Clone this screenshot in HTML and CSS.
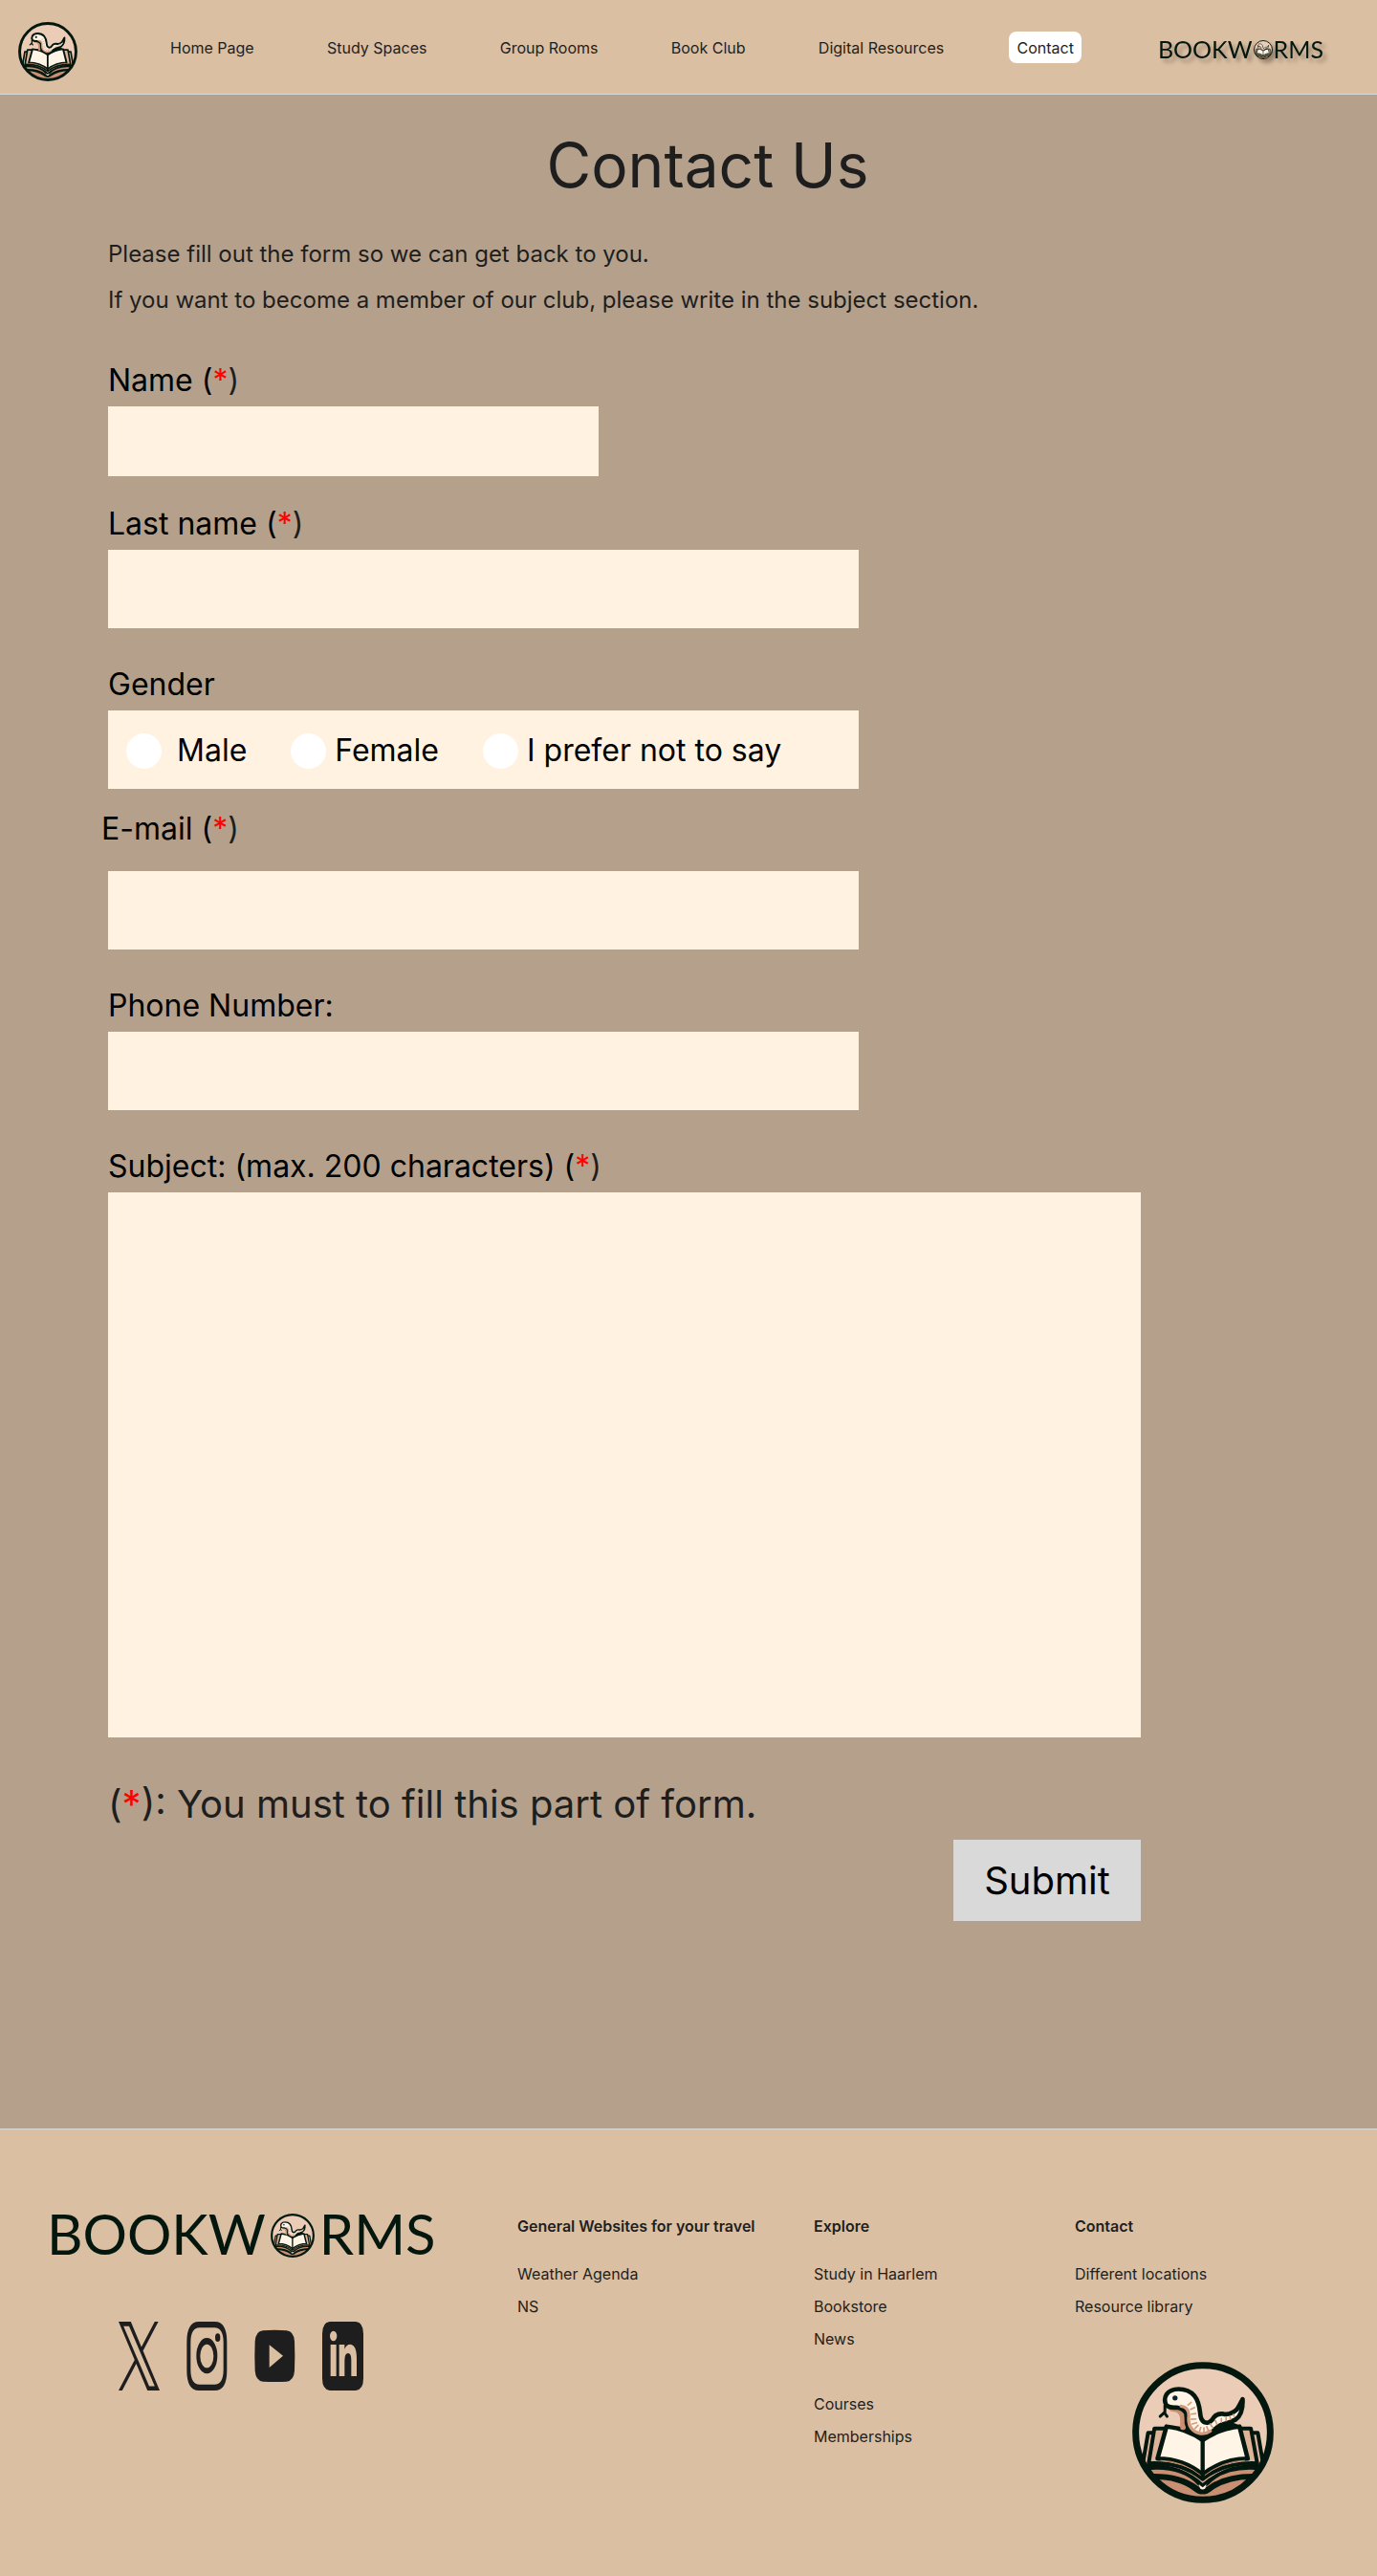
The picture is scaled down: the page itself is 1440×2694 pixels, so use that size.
FILE: index.html
```html
<!DOCTYPE html>
<html lang="en">
<head>
<meta charset="utf-8">
<meta name="viewport" content="width=device-width, initial-scale=1">
<title>Bookworms – Contact Us</title>
<link rel="stylesheet" href="styles.css">
</head>
<body>
<svg class="sprite" aria-hidden="true">
  <symbol id="emblem" viewBox="44 30 446 446">
    <clipPath id="disc"><circle cx="267" cy="253" r="213"/></clipPath>
    <circle cx="267" cy="253" r="212" fill="#ebcdb7"/>
    <g clip-path="url(#disc)" stroke-linejoin="round" stroke-linecap="round">
      <!-- shaded base below the book -->
      <path d="M80 350L120 400Q200 405 267 430Q335 405 415 400L455 350V480H80Z" fill="#c98f72"/>
      <!-- page stack and cover -->
      <g fill="#ddb49a" stroke="#04170e" stroke-width="12">
        <path d="M94 254L76 360Q190 350 266 420Q345 350 458 360L440 254Z"/>
        <path d="M114 240L96 350Q200 345 266 400Q335 345 438 350L418 240Z"/>
      </g>
      <path d="M90 366Q200 356 254 414Q266 424 280 414Q335 356 446 366L432 388Q340 386 286 426Q266 444 248 426Q195 386 104 388Z" fill="#c98f72" stroke="#04170e" stroke-width="11"/>
      <path d="M104 394Q190 392 240 430Q266 452 292 430Q345 392 430 394" fill="none" stroke="#04170e" stroke-width="13"/>
      <path d="M254 416L266 426L278 416L274 429Q266 435 258 429Z" fill="#fff5e6"/>
      <!-- open pages -->
      <path d="M152 234Q215 240 266 277Q318 240 382 234L408 335Q330 335 266 385Q205 335 124 335Z" fill="#fff5e6" stroke="#04170e" stroke-width="14"/>
      <path d="M134 341Q205 342 266 392Q330 342 398 341" fill="none" stroke="#c98f72" stroke-width="3"/>
      <path d="M266 272V395" stroke="#04170e" stroke-width="13"/>
      <path d="M205 236L262 276H272L378 228L340 214Z" fill="#04170e"/>
      <!-- worm -->
      <path d="M170 178Q202 178 204 208V236" fill="none" stroke="#c98f72" stroke-width="18"/>
      <path d="M152 168Q142 150 152 133Q164 116 190 116Q222 116 240 137Q254 154 258 190Q260 222 280 222Q292 221 302 204Q312 192 330 194Q352 200 374 180Q382 168 392 148Q394 195 370 212Q348 224 326 228Q308 236 296 252Q278 266 254 260Q222 252 216 224Q216 205 214 192Q204 176 184 174Q164 176 152 168Z" fill="#fff5e6" stroke="#04170e" stroke-width="14"/>
      <path d="M198 170Q224 174 222 202Q218 244 254 255Q274 260 290 248" fill="none" stroke="#d39b7d" stroke-width="10"/>
      <path d="M220 166L230 158M228 180L241 174M230 195L244 193M230 211L245 210M233 226L247 222M242 240L252 230M256 250L260 237M270 252V238M284 248L279 234M298 238L290 226M311 227L306 215M325 220V209M340 216V206M354 211L352 203M366 202L362 196" stroke="#d39b7d" stroke-width="5"/>
      <circle cx="179" cy="144" r="8" fill="#0b2430"/>
      <path d="M147 168V190M132 202L145 190L154 202" fill="none" stroke="#04170e" stroke-width="9"/>
    </g>
    <circle cx="267" cy="253" r="212" fill="none" stroke="#04170e" stroke-width="21"/>
  </symbol>
</svg>

<header class="site-header">
  <a class="brand" href="#" aria-label="Bookworms home"><svg class="brand-mark" aria-hidden="true"><use href="#emblem"/></svg></a>
  <nav class="nav" aria-label="Main">
    <a href="#">Home Page</a>
    <a href="#">Study Spaces</a>
    <a href="#">Group Rooms</a>
    <a href="#">Book Club</a>
    <a href="#">Digital Resources</a>
    <a href="#" class="is-active" aria-current="page">Contact</a>
  </nav>
  <div class="wordmark wordmark-small"><span>BOOKW</span><svg aria-hidden="true"><use href="#emblem"/></svg><span>RMS</span></div>
</header>

<main class="main">
  <h1>Contact Us</h1>
  <div class="intro">
    <p>Please fill out the form so we can get back to you.</p>
    <p>If you want to become a member of our club, please write in the subject section.</p>
  </div>
  <form class="form">
    <div class="field field-short">
      <label for="name">Name (<span class="req"><b>*</b>)</span></label>
      <input type="text" id="name" required>
    </div>
    <div class="field">
      <label for="last-name">Last name (<span class="req"><b>*</b>)</span></label>
      <input type="text" id="last-name" required>
    </div>
    <fieldset class="field field-gender">
      <legend>Gender</legend>
      <div class="options">
        <div class="option option-wide"><input type="radio" name="gender" id="male"><label for="male">Male</label></div>
        <div class="option"><input type="radio" name="gender" id="female"><label for="female">Female</label></div>
        <div class="option"><input type="radio" name="gender" id="unsaid"><label for="unsaid">I prefer not to say</label></div>
      </div>
    </fieldset>
    <div class="field field-email">
      <label for="email">E-mail (<span class="req"><b>*</b>)</span></label>
      <input type="email" id="email" required>
    </div>
    <div class="field">
      <label for="phone">Phone Number:</label>
      <input type="tel" id="phone">
    </div>
    <div class="field field-subject">
      <label for="subject">Subject: (max. 200 characters) (<span class="req"><b>*</b>)</span></label>
      <textarea id="subject" maxlength="200" required></textarea>
    </div>
    <p class="note">(<b>*</b>): You must to fill this part of form.</p>
    <button type="submit">Submit</button>
  </form>
</main>

<footer class="site-footer">
  <div class="footer-brand">
    <div class="wordmark"><span>BOOKW</span><svg aria-hidden="true"><use href="#emblem"/></svg><span>RMS</span></div>
    <div class="social">
      <a href="#" aria-label="X"><svg viewBox="0 0 1200 1227" preserveAspectRatio="none"><path d="M714.163 519.284L1160.89 0H1055.03L667.137 450.887L357.328 0H0L468.492 681.821L0 1226.37H105.866L515.491 750.218L842.672 1226.37H1200L714.137 519.284H714.163ZM569.165 687.828L521.697 619.934L144.011 79.6944H306.615L611.412 515.685L658.88 583.579L1055.08 1150.3H892.476L569.165 687.854V687.828Z"/></svg></a>
      <a href="#" aria-label="Instagram"><svg viewBox="467 384 129 216" preserveAspectRatio="none"><path fill-rule="evenodd" d="M506 384H556Q594 384 594 448V536Q594 600 556 600H506Q468 600 468 536V448Q468 384 506 384ZM508 403Q480 403 480 450V534Q480 581 508 581H555Q583 581 583 534V450Q583 403 555 403ZM531 435A33 56 0 0 1 531 547A33 56 0 0 1 531 435ZM531 455A21 37 0 0 0 531 529A21 37 0 0 0 531 455Z"/><ellipse cx="565" cy="434" rx="8" ry="13"/></svg></a>
      <a href="#" aria-label="YouTube"><svg viewBox="680 384 129 216" preserveAspectRatio="none"><path fill-rule="evenodd" d="M707 412Q744 409 781 412Q804 414 806 446Q808 491 806 538Q804 570 781 572Q744 574 707 572Q684 570 682 538Q680 491 682 446Q684 414 707 412ZM727 457V528L770 491Z"/></svg></a>
      <a href="#" aria-label="LinkedIn"><svg viewBox="894 384 129 216" preserveAspectRatio="none"><path fill-rule="evenodd" d="M918 384H999Q1023 386 1023 422V562Q1023 598 999 600H918Q894 598 894 562V422Q894 386 918 384ZM929 413A11 16 0 0 0 929 445A11 16 0 0 0 929 413ZM920 456V555H938V456ZM947 456V555H964V506Q964 484 975 483Q985 483 985 505V555H1002V500Q1002 457 982 455Q970 455 964 470V456Z"/></svg></a>
    </div>
  </div>
  <div class="footer-col">
    <h2>General Websites for your travel</h2>
    <ul><li><a href="#">Weather Agenda</a></li><li><a href="#">NS</a></li></ul>
  </div>
  <div class="footer-col">
    <h2>Explore</h2>
    <ul><li><a href="#">Study in Haarlem</a></li><li><a href="#">Bookstore</a></li><li><a href="#">News</a></li></ul>
    <ul class="more"><li><a href="#">Courses</a></li><li><a href="#">Memberships</a></li></ul>
  </div>
  <div class="footer-col">
    <h2>Contact</h2>
    <ul><li><a href="#">Different locations</a></li><li><a href="#">Resource library</a></li></ul>
    <svg class="footer-mark" aria-hidden="true"><use href="#emblem"/></svg>
  </div>
</footer>
</body>
</html>
```
FILE: styles.css
```css
* { box-sizing: border-box; }

body {
  margin: 0;
  background: #dbbfa2;
  color: #1e1e1e;
  font: 16px/24px Inter, "Liberation Sans", sans-serif;
}

a { color: inherit; text-decoration: none; }
h1, h2, p, ul { margin: 0; padding: 0; font-weight: 400; }
ul { list-style: none; }
b { color: #f00; font-weight: 400; }

.sprite { position: absolute; width: 0; height: 0; }

/* Header */
.site-header {
  display: flex;
  align-items: center;
  height: 99px;
  padding: 0 56px 0 19px;
  border-bottom: 1px solid #d9d9d9;
}
.brand { padding-top: 10px; }
.brand-mark { display: block; width: 62px; height: 62px; }
.nav {
  flex: 1;
  display: flex;
  justify-content: space-between;
  margin: 0 80px 0 89px;
}
.nav a { padding: 5px 8px 4px; border-radius: 8px; }
.nav .is-active { background: #fff; }

.wordmark {
  display: flex;
  align-items: center;
  gap: 5px;
  margin-left: -4px;
  color: #04170e;
  font: 58px/60px Lato, "Liberation Sans", sans-serif;
}
.wordmark svg { width: 46px; height: 46px; margin-top: 4px; }
.wordmark-small {
  gap: 1px;
  margin: 3px 0 0;
  font-size: 25px;
  line-height: 26px;
  filter: drop-shadow(4px 4px 2px rgba(0, 0, 0, .3));
}
.wordmark-small svg { width: 20px; height: 20px; margin-top: 2px; }

/* Contact form */
.main {
  padding: 34px 113px 217px;
  background: #b5a18b;
}
h1 {
  padding-left: 40px;
  font-size: 64px;
  line-height: 80px;
  text-align: center;
}
.intro { margin-top: 29px; font-size: 24px; line-height: 48px; }
.form {
  display: flex;
  flex-direction: column;
  max-width: 1080px;
  margin-top: 40px;
}
.field {
  display: flex;
  flex-direction: column;
  gap: 7px;
  max-width: 785px;
  min-width: 0;
  margin: 0 0 39px;
  padding: 0;
  border: 0;
  color: #000;
  font-size: 32px;
  line-height: 40px;
}
.field > input, .field textarea, .options {
  width: 100%;
  height: 82px;
  padding: 0 19px;
  border: 0;
  border-radius: 0;
  background: #fff2e1;
  font: inherit;
}
.req { color: #1e1e1e; }
.field-short { max-width: 513px; margin-bottom: 30px; }
.field-short > input { height: 73px; }
.field-gender { display: block; margin-bottom: 22px; }
.field-gender legend { padding: 0; margin-bottom: 7px; }
.field .options { display: flex; align-items: center; gap: 46px; padding-top: 2px; }
.option { display: flex; align-items: center; gap: 9px; }
.option-wide { gap: 16px; }
.option input {
  appearance: none;
  width: 37px;
  height: 37px;
  margin: 0;
  border-radius: 50%;
  background: #fff;
}
.option input:checked { border: 10px solid #fff; background: #04170e; }
.field-email { gap: 24px; }
.field-email label { margin-left: -7px; }
.field-subject { max-width: none; margin-bottom: 46px; }
.field textarea { height: 570px; padding: 16px 19px; resize: none; }
.note { font-size: 40px; line-height: 48px; }
.form button {
  align-self: flex-end;
  width: 196px;
  height: 85px;
  margin-top: 13px;
  border: 0;
  background: #d9d9d9;
  color: #000;
  font: inherit;
  font-size: 40px;
  line-height: 48px;
}

/* Footer */
.site-footer {
  display: grid;
  grid-template-columns: 488fr 310fr 273fr 263fr;
  padding: 79px 53px 76px;
  border-top: 1px solid #d9d9d9;
}
.social { display: flex; gap: 28px; margin-top: 62px; padding-left: 71px; }
.social svg { display: block; width: 43px; height: 72px; fill: #1e1e1e; }
.footer-col { padding-top: 10px; }
.footer-col h2 { font-size: 16px; font-weight: 600; white-space: nowrap; }
.footer-col ul { margin-top: 21px; line-height: 34px; }
.footer-col .more { margin-top: 34px; }
.footer-mark { display: block; width: 148px; height: 148px; margin: 41px 0 0 60px; }
```
